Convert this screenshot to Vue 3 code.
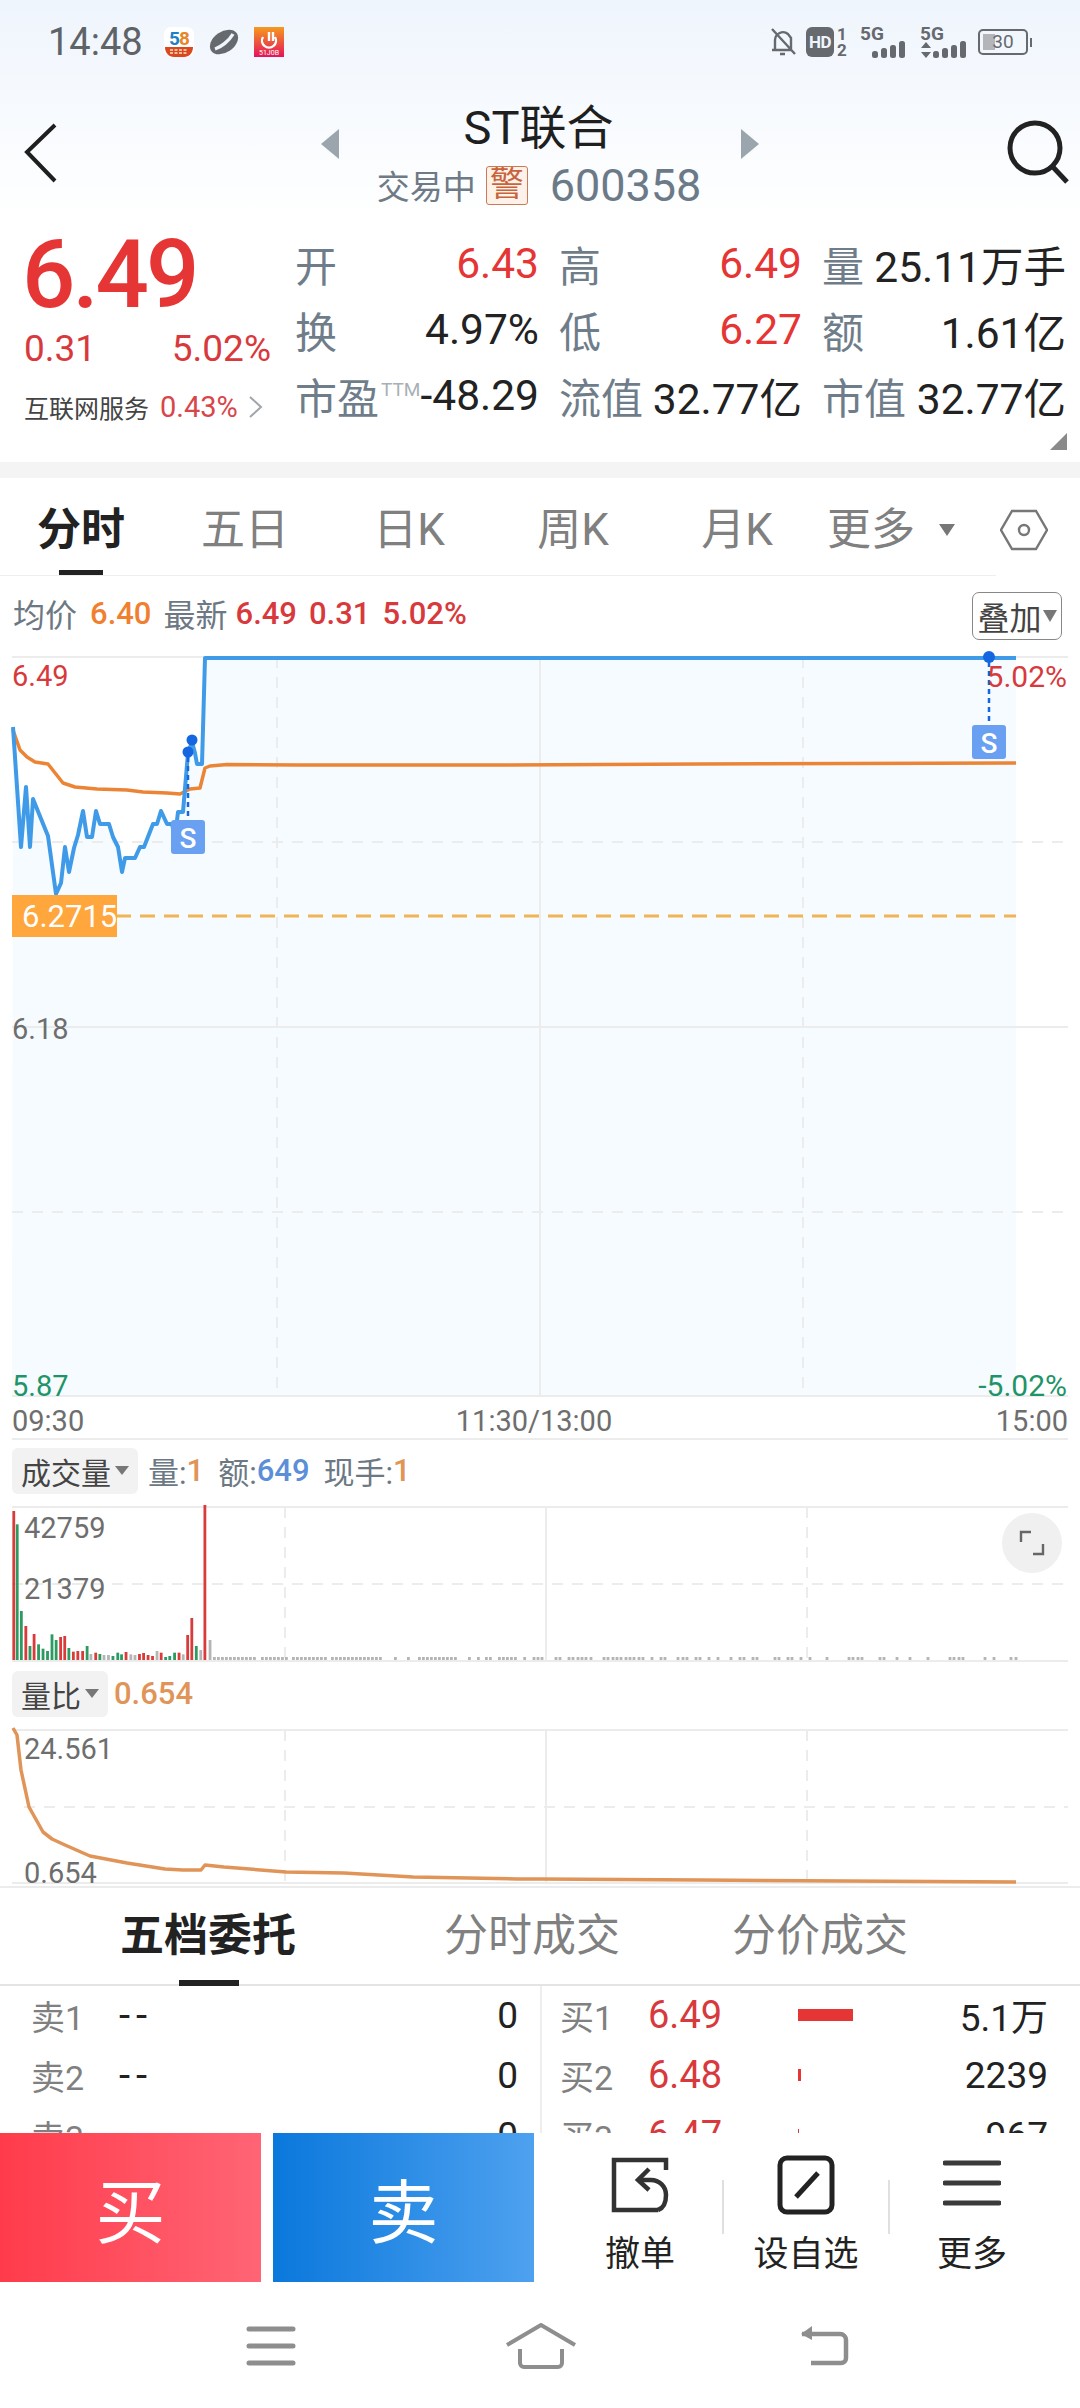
<template>
  <div class="screen">
    <header class="top">
      <div class="status">
        <span class="clock">14:48</span>
        <svg class="app-icon" width="30" height="30" viewBox="0 0 30 30">
          <rect width="30" height="30" rx="7" fill="#fff" />
          <text x="5" y="18" class="t58" fill="#1d7fc9">5</text>
          <text x="15" y="18" class="t58" fill="#e8862a">8</text>
          <path d="M1 20h28c0 6-4 10-9 10H10C5 30 1 26 1 20z" fill="#d9481f" />
          <path d="M6 23h18M6 26h18" stroke="#fbe3c5" stroke-width="1.6" stroke-dasharray="3 1.5" />
        </svg>
        <svg class="app-icon planet" width="30" height="28" viewBox="0 0 30 28">
          <ellipse cx="15" cy="14" rx="15.5" ry="10.5" transform="rotate(-35 15 14)" fill="#66696e" />
          <path d="M6 21 C12 19 20 13 24 6" stroke="#eff5fd" stroke-width="3.4" fill="none" />
        </svg>
        <svg class="app-icon" width="30" height="30" viewBox="0 0 30 30">
          <defs>
            <linearGradient id="appred" x1="0" y1="0" x2="0" y2="1">
              <stop offset="0" stop-color="#f59a1d" />
              <stop offset="1" stop-color="#e5135c" />
            </linearGradient>
          </defs>
          <rect width="30" height="30" fill="url(#appred)" />
          <path d="M9 10a7 7 0 1 0 12 0M15 5v9M19 5v9" stroke="#fff" stroke-width="2.4" fill="none" />
          <text x="15" y="28" class="tiny" text-anchor="middle">51J0B</text>
        </svg>
        <div class="status-right">
          <svg width="28" height="30" viewBox="0 0 28 30" fill="none" stroke="#66696e" stroke-width="2.4">
            <path d="M6 22V13a8 8 0 0 1 13-6l3 4v11M3 23h20M11 27h5M3 2l23 25" />
          </svg>
          <span class="hd">HD</span>
          <span class="sim"><b>1</b><b>2</b></span>
          <span class="net">
            <b>5G</b>
            <svg width="36" height="17" viewBox="0 0 36 17" fill="#66696e">
              <rect x="1" y="10" width="6" height="7" rx="2.5" /><rect x="10" y="7" width="6" height="10" rx="2.5" /><rect x="19" y="4" width="6" height="13" rx="2.5" /><rect x="28" y="0" width="6" height="17" rx="2.5" />
            </svg>
          </span>
          <span class="net second">
            <b>5G</b>
            <svg width="48" height="17" viewBox="0 0 48 17" fill="#66696e">
              <path d="M1 7l5-6 5 6zM1 11h10l-5 6z" />
              <rect x="13" y="10" width="6" height="7" rx="2.5" /><rect x="22" y="7" width="6" height="10" rx="2.5" /><rect x="31" y="4" width="6" height="13" rx="2.5" /><rect x="40" y="0" width="6" height="17" rx="2.5" />
            </svg>
          </span>
          <span class="battery"><i></i><em>30</em></span>
          <span class="nub"></span>
        </div>
      </div>
      <div class="title-bar">
        <svg class="back" width="40" height="64" viewBox="0 0 40 64" fill="none" stroke="#1f1f1f" stroke-width="4">
          <path d="M32 4L4 31l28 29" />
        </svg>
        <div class="title-mid">
          <span class="tri-l"></span>
          <div class="title-text">
            <div class="name">ST联合</div>
            <div class="sub">
              <span class="trading">交易中</span>
              <span class="warn">警</span>
              <span class="code">600358</span>
            </div>
          </div>
          <span class="tri-r"></span>
        </div>
        <svg class="search" width="66" height="64" viewBox="0 0 66 64" fill="none" stroke="#222" stroke-width="5">
          <circle cx="29" cy="28" r="25" />
          <path d="M46 46l15 16" />
        </svg>
      </div>
    </header>

    <section class="quote">
      <div class="quote-left">
        <div class="price">6.49</div>
        <div class="change"><span>0.31</span><span>5.02%</span></div>
        <div class="sector">
          <span class="sector-name">互联网服务</span>
          <span class="sector-pct">0.43%</span>
          <svg width="16" height="22" viewBox="0 0 16 22" fill="none" stroke="#a0a6ab" stroke-width="2"><path d="M2 1l11 10L2 21" /></svg>
        </div>
      </div>
      <div class="quote-grid">
        <div v-for="item in quoteItems" :key="item.label" class="cell" :class="item.col">
          <span class="lab">{{ item.label }}<sup v-if="item.sup">{{ item.sup }}</sup></span>
          <span class="val" :class="{ up: item.up }">{{ item.value }}</span>
        </div>
      </div>
      <span class="corner"></span>
    </section>
    <div class="band"></div>

    <nav class="tabs">
      <div v-for="t in periods" :key="t" class="tab" :class="{ active: t === '分时' }">{{ t }}</div>
      <div class="tab-more">更多<span class="small-tri"></span></div>
      <svg class="hex" width="48" height="42" viewBox="0 0 48 42" fill="none" stroke="#777" stroke-width="2.4">
        <path d="M12 2h24l11 19-11 19H12L1 21z" />
        <circle cx="24" cy="21" r="5" />
      </svg>
    </nav>

    <div class="chart-head">
      <span class="gray">均价</span>
      <span class="orange">6.40</span>
      <span class="gray">最新</span>
      <span class="red latest">6.49</span>
      <span class="red">0.31</span>
      <span class="red">5.02%</span>
      <span class="overlay">叠加<span class="small-tri"></span></span>
    </div>

    <svg class="price-chart" width="1080" height="754" viewBox="0 650 1080 754">
      <polygon :points="`${pricePts} 1016,1396 12,1396`" fill="#f6fbff" />
      <path d="M12 657H1068" class="grid-solid" />
      <path d="M12 842H1068M12 1212H1068" class="grid-dash" />
      <path d="M12 1027H1068" class="grid-solid" />
      <path d="M12 1396H1068" class="grid-solid" />
      <path d="M277 657V1396M803 657V1396" class="grid-dash" />
      <path d="M540 657V1396" class="grid-solid" />
      <path d="M12 916H1016" class="tag-line" />
      <polyline :points="avgPts" class="line-avg" />
      <polyline :points="pricePts" class="line-price" />
      <path d="M188 757V820M989 662V725" class="dot-line" />
      <circle cx="188" cy="752" r="5.5" fill="#1467e0" />
      <circle cx="192" cy="740" r="5.5" fill="#1467e0" />
      <circle cx="989" cy="657" r="6" fill="#1467e0" />
      <rect x="171" y="820" width="34" height="34" rx="3" fill="#6aa0f2" />
      <text x="188" y="848" class="s-mark">S</text>
      <rect x="972" y="725" width="34" height="34" rx="3" fill="#6aa0f2" />
      <text x="989" y="753" class="s-mark">S</text>
      <rect x="12" y="895" width="105" height="42" fill="#ffa63d" />
      <text x="22" y="927" class="tag-text">6.2715</text>
      <text x="12" y="686" class="axis red-fill">6.49</text>
      <text x="12" y="1039" class="axis gray-fill">6.18</text>
      <text x="12" y="1396" class="axis green-fill">5.87</text>
      <text x="1067" y="687" class="axis wide red-fill end">5.02%</text>
      <text x="1067" y="1396" class="axis wide green-fill end">-5.02%</text>
    </svg>
    <div class="time-row"><span>09:30</span><span class="mid-time">11:30/13:00</span><span>15:00</span></div>

    <div class="sub-head vol-head">
      <span class="chip">成交量<span class="chip-tri"></span></span>
      <span class="gray">量:</span><span class="peach">1</span>
      <span class="gray gap">额:</span><span class="blue">649</span>
      <span class="gray gap">现手:</span><span class="peach">1</span>
    </div>
    <div class="sub-chart">
      <svg width="1080" height="160" viewBox="0 1505 1080 160">
        <path d="M12 1507H1068M12 1661H1068M546 1507V1661" class="grid-solid" />
        <path d="M12 1584H1068M285 1507V1661M807 1507V1661" class="grid-dash" />
        <rect v-for="(b, i) in volBars" :key="i" :x="b.x" :y="1660 - b.h" width="2.8" :height="b.h" :fill="b.c" />
        <text x="24" y="1538" class="axis gray-fill">42759</text>
        <text x="24" y="1599" class="axis gray-fill">21379</text>
      </svg>
      <span class="expand">
        <svg width="26" height="26" viewBox="0 0 26 26" fill="none" stroke="#666" stroke-width="2.4">
          <path d="M2 12V2h10M24 14v10H14" />
        </svg>
      </span>
    </div>

    <div class="sub-head ratio-head">
      <span class="chip">量比<span class="chip-tri"></span></span>
      <span class="peach ratio-val">0.654</span>
    </div>
    <svg class="ratio-chart" width="1080" height="160" viewBox="0 1726 1080 160">
      <path d="M12 1730H1068M12 1883H1068M546 1730V1883" class="grid-solid" />
      <path d="M24 1807H1068M285 1730V1883M807 1730V1883" class="grid-dash" />
      <polyline :points="ratioPts" class="line-ratio" />
      <text x="24" y="1759" class="axis gray-fill">24.561</text>
      <text x="24" y="1883" class="axis gray-fill">0.654</text>
    </svg>

    <div class="book-tabs">
      <div class="book-tab on">五档委托</div>
      <div class="book-tab">分时成交</div>
      <div class="book-tab">分价成交</div>
    </div>
    <div class="book">
      <div class="book-side sell">
        <div v-for="r in sellRows" :key="r.label" class="book-row">
          <span class="b-label">{{ r.label }}</span>
          <span class="b-price dark">{{ r.price }}</span>
          <span class="b-vol">{{ r.vol }}</span>
        </div>
      </div>
      <div class="book-side buy">
        <div v-for="r in buyRows" :key="r.label" class="book-row">
          <span class="b-label">{{ r.label }}</span>
          <span class="b-price">{{ r.price }}</span>
          <span class="b-bar"><i :style="{ width: r.bar + 'px' }"></i></span>
          <span class="b-vol">{{ r.vol }}</span>
        </div>
      </div>
    </div>

    <div class="actions">
      <button class="trade buy-btn">买</button>
      <button class="trade sell-btn">卖</button>
      <div class="action">
        <svg width="58" height="56" viewBox="0 0 58 56" fill="none" stroke="#333" stroke-width="4.5">
          <path d="M55 13V3H3v50h44" />
          <path d="M47 53c6-2 8-8 8-15 0-9-7-15-15-15H29" />
          <path d="M38 12L27 23l11 10" />
        </svg>
        <span>撤单</span>
      </div>
      <i class="sep"></i>
      <div class="action">
        <svg width="58" height="60" viewBox="0 0 58 60" fill="none" stroke="#222" stroke-width="5">
          <rect x="3" y="3" width="52" height="54" rx="7" />
          <path d="M41 18L19 42" stroke-width="5" />
        </svg>
        <span>设自选</span>
      </div>
      <i class="sep"></i>
      <div class="action">
        <svg width="58" height="56" viewBox="0 0 58 56" fill="none" stroke="#3a3a3a" stroke-width="5" stroke-linecap="round">
          <path d="M2 6h54M2 26h54M2 46h54" />
        </svg>
        <span>更多</span>
      </div>
    </div>

    <footer class="nav">
      <svg width="50" height="40" viewBox="0 0 50 40" fill="none" stroke="#8e8e8e" stroke-width="5" stroke-linecap="round">
        <path d="M3 3h44M3 20h44M3 37h44" />
      </svg>
      <svg width="72" height="46" viewBox="0 0 72 46" fill="none" stroke="#8e8e8e" stroke-width="4">
        <path d="M2 22L36 2l34 20" stroke-linejoin="round" />
        <path d="M15 26v14a4 4 0 0 0 4 4h34a4 4 0 0 0 4-4V26" />
      </svg>
      <svg width="52" height="40" viewBox="0 0 52 40" fill="none" stroke="#8e8e8e" stroke-width="4.5">
        <path d="M4 8h38a6 6 0 0 1 6 6v18a5 5 0 0 1-5 5H13" />
        <path d="M14 0L3 8l11 6z" fill="#8e8e8e" stroke="none" />
      </svg>
    </footer>
  </div>
</template>

<script setup>
const quoteItems = [
  { label: '开', value: '6.43', up: true, col: 'c1' },
  { label: '高', value: '6.49', up: true, col: 'c2' },
  { label: '量', value: '25.11万手', col: 'c3' },
  { label: '换', value: '4.97%', col: 'c1' },
  { label: '低', value: '6.27', up: true, col: 'c2' },
  { label: '额', value: '1.61亿', col: 'c3' },
  { label: '市盈', sup: 'TTM', value: '-48.29', col: 'c1' },
  { label: '流值', value: '32.77亿', col: 'c2' },
  { label: '市值', value: '32.77亿', col: 'c3' },
]

const periods = ['分时', '五日', '日K', '周K', '月K']

const pricePts = '13,727 21,847 26,787 30,847 33,799 48,836 56,894 61,883 65,847 69,872 74,848 78,835 83,811 87,837 92,837 96,811 100,824 109,824 113,837 118,847 122,872 125,858 135,858 140,847 144,847 153,824 157,824 161,811 167,824 172,824 175,837 178,812 183,812 188,753 192,742 195,753 197,764 202,764 205,658 1016,658'
const avgPts = '13,730 20,750 27,757 35,762 48,764 63,783 75,787 97,789 127,790 143,792 167,793 180,794 190,789 200,788 205,768 210,766 227,764.5 300,765 500,765 700,764 1016,763'
const ratioPts = '13,1728 17,1735 21,1770 29,1807 43,1832 52,1839 65,1845 90,1856 127,1863 165,1869 183,1870 201,1870 205,1865 224,1867 286,1872 344,1873 413,1877 517,1879 540,1879 700,1880 1016,1882'

const R = '#d93a3a'
const G = '#2d9a62'
const A = '#b5b5b5'
// [x, 顶部y, 颜色], 取自放大后的坐标
const rawBars = [
  [40, 455, R], [50, 495, G], [62, 755, G], [75, 800, R], [87, 860, G], [99, 824, R], [112, 855, G], [125, 868, G],
  [138, 875, G], [151, 825, G], [163, 842, G], [176, 833, R], [188, 830, R], [200, 866, G], [213, 877, R], [226, 875, R],
  [240, 875, R], [253, 860, G], [264, 884, A], [278, 880, R], [290, 884, G], [302, 887, A], [315, 887, A], [328, 890, G],
  [342, 880, G], [353, 885, G], [366, 878, R], [380, 885, A], [392, 887, A], [405, 884, R], [417, 881, R], [430, 887, R],
  [443, 890, R], [456, 875, A], [468, 880, R], [481, 893, G], [493, 890, G], [507, 880, G], [520, 880, R], [532, 885, A],
  [545, 827, R], [557, 776, R], [570, 860, G], [583, 872, A], [595, 437, R], [610, 842, A],
]
const leftDots = [
  [213, 255], [261, 285], [292, 324], [331, 382], [394, 394], [407, 407], [418, 456], [468, 468], [477, 477],
  [485, 491], [498, 517],
]
const rightDots = [14, 42, 54, 66, 108, 120, 147, 159, 174, 186, 198, 213, 252, 264, 279, 291, 303, 318, 330, 342, 357, 369, 396, 423, 435, 474, 489, 501, 528, 540, 567, 594, 633, 660, 672, 699, 711, 765, 777, 804, 816, 843, 870, 921, 987, 999, 1014, 1026, 1080, 1092, 1131, 1170, 1224, 1290, 1302, 1317, 1329, 1395, 1422, 1473, 1488]

const volBars = rawBars.map(([x, y, c]) => ({ x: x / 2.904 - 1.4, h: (902 - y) / 3, c }))
leftDots.forEach(([a, b]) => {
  for (let x = a; x <= b; x += 4) volBars.push({ x, h: 3, c: A })
})
rightDots.forEach((x) => volBars.push({ x: 520 + x / 3 - 1.4, h: 3, c: A }))

const sellRows = [
  { label: '卖1', price: '--', vol: '0' },
  { label: '卖2', price: '--', vol: '0' },
  { label: '卖3', price: '--', vol: '0' },
]
const buyRows = [
  { label: '买1', price: '6.49', bar: 55, vol: '5.1万' },
  { label: '买2', price: '6.48', bar: 3, vol: '2239' },
  { label: '买3', price: '6.47', bar: 1, vol: '967' },
]
</script>

<style scoped>
.screen {
  position: relative;
  width: 1080px;
  height: 2408px;
  overflow: hidden;
  background: #fff;
  color: #222;
  font-family: Roboto, "Noto Sans CJK SC", sans-serif;
}
b, em, i { font-style: normal; }

.top {
  height: 220px;
  background: linear-gradient(#eff5fd, #fff);
}
.status {
  height: 84px;
  display: flex;
  align-items: center;
  padding-left: 48px;
}
.clock {
  font-size: 38px;
  color: #5e6368;
  width: 116px;
}
.app-icon { margin-right: 15px; }
.t58 { font-size: 19px; font-weight: 700; font-family: Roboto, sans-serif; }
.tiny { font-size: 7px; fill: #fff; font-family: Roboto, sans-serif; }
.status-right {
  margin-left: auto;
  margin-right: 48px;
  display: flex;
  align-items: center;
  color: #66696e;
}
.hd {
  width: 28px;
  height: 30px;
  margin-left: 9px;
  background: #66696e;
  border-radius: 6px;
  color: #eff5fd;
  font-size: 17px;
  font-weight: 700;
  line-height: 30px;
  text-align: center;
  letter-spacing: -0.5px;
}
.sim {
  display: flex;
  flex-direction: column;
  margin-left: 3px;
  width: 12px;
  font-size: 17px;
  line-height: 16px;
}
.net {
  display: flex;
  flex-direction: column;
  margin-left: 11px;
  width: 47px;
  height: 32px;
  position: relative;
  font-size: 19px;
  line-height: 15px;
}
.net svg { align-self: flex-end; }
.second { width: 48px; margin-left: 13px; }
.battery {
  position: relative;
  width: 50px;
  height: 26px;
  margin-left: 10px;
  border: 2px solid #66696e;
  border-radius: 5px;
  box-sizing: border-box;
  text-align: center;
  font-size: 19px;
  line-height: 22px;
}
.battery i {
  position: absolute;
  left: 3px;
  top: 3px;
  width: 12px;
  height: 16px;
  background: #b3b5b8;
}
.battery em { position: relative; }
.nub {
  width: 2px;
  height: 9px;
  margin-left: 2px;
  background: #66696e;
}

.title-bar {
  position: relative;
  height: 136px;
  display: flex;
}
.back { position: absolute; left: 23px; top: 37px; }
.search { position: absolute; left: 1006px; top: 36px; }
.title-mid {
  margin: 0 auto;
  width: 438px;
  height: 136px;
  display: flex;
  justify-content: space-between;
  align-items: flex-start;
}
.tri-l, .tri-r {
  width: 0;
  height: 0;
  margin-top: 45px;
  border-top: 15px solid transparent;
  border-bottom: 15px solid transparent;
}
.tri-l { border-right: 18px solid #9aa5ad; }
.tri-r { border-left: 18px solid #9aa5ad; }
.title-text { text-align: center; }
.name {
  height: 70px;
  padding-top: 14px;
  padding-right: 3px;
  box-sizing: border-box;
  font-size: 47px;
  line-height: 60px;
  color: #1f1f1f;
}
.sub {
  display: flex;
  align-items: center;
  height: 40px;
  margin-top: 11px;
  margin-left: -2px;
  white-space: nowrap;
}
.trading { font-size: 33px; color: #6e7a85; }
.warn {
  width: 42px;
  height: 39px;
  margin-left: 10px;
  box-sizing: border-box;
  border: 1.5px solid #cc7a55;
  border-radius: 3px;
  background: #fdf1ea;
  color: #c8643c;
  font-size: 34px;
  line-height: 35px;
  text-align: center;
}
.code {
  margin-left: 22px;
  font-size: 45px;
  color: #6c7a88;
}

.quote {
  position: relative;
  height: 242px;
  display: flex;
}
.quote-left { width: 295px; padding-left: 24px; box-sizing: border-box; }
.price {
  height: 104px;
  padding-top: 2px;
  margin-left: -2px;
  font-size: 94px;
  line-height: 106px;
  font-weight: 500;
  letter-spacing: -3px;
  color: #e53535;
}
.change {
  display: flex;
  justify-content: space-between;
  width: 247px;
  height: 46px;
  font-size: 37px;
  line-height: 46px;
  color: #d8393c;
}
.sector {
  display: flex;
  align-items: center;
  height: 36px;
  margin-top: 17px;
}
.sector-name { font-size: 25px; color: #444; }
.sector-pct { margin-left: 11px; margin-right: 10px; font-size: 29px; color: #d8464a; }
.quote-grid {
  display: grid;
  grid-template-columns: 244px 243px 244px;
  column-gap: 20px;
  grid-auto-rows: 66px;
  padding-top: 10px;
}
.cell {
  display: flex;
  justify-content: space-between;
  align-items: center;
  font-size: 42px;
  white-space: nowrap;
}
.cell .val { font-size: 42.5px; }
.lab { color: #6f7d8a; }
.lab sup { font-size: 19px; color: #a8b0b6; vertical-align: 18px; line-height: 0; margin-left: 2px; }
.val { color: #222; }
.val.up { color: #e53535; }
.corner {
  position: absolute;
  right: 13px;
  bottom: 12px;
  width: 0;
  height: 0;
  border-left: 17px solid transparent;
  border-bottom: 17px solid #8a8a8a;
}
.band { height: 16px; background: #f4f4f4; }

.tabs {
  position: relative;
  display: flex;
  height: 98px;
  box-sizing: border-box;
  align-items: flex-start;
}
.tabs::after {
  content: "";
  position: absolute;
  left: 0;
  bottom: 0;
  width: 996px;
  height: 1px;
  background: #eee;
}
.tab, .tab-more {
  font-size: 44px;
  line-height: 104px;
  color: #808080;
}
.tab { width: 164px; text-align: center; position: relative; left: -1px; }
.tab.active { color: #222; font-weight: 700; }
.tab.active::after {
  content: "";
  position: absolute;
  left: 60px;
  top: 92px;
  width: 44px;
  height: 6px;
  background: #222;
}
.tab-more { margin-left: 7px; display: flex; align-items: center; height: 104px; }
.small-tri {
  width: 0;
  height: 0;
  border-left: 8px solid transparent;
  border-right: 8px solid transparent;
  border-top: 12px solid #777;
}
.tab-more .small-tri { margin-left: 24px; }
.hex { margin-left: 45px; margin-top: 31px; }

.chart-head {
  position: relative;
  height: 74px;
  padding-left: 13px;
  display: flex;
  align-items: center;
  gap: 12px;
  font-size: 31px;
  font-weight: 500;
}
.gray { color: #6c7883; font-size: 32px; font-weight: 400; }
.orange { color: #f08030; margin-left: 1px; }
.red { color: #d8393c; }
.latest { margin-left: -4px; }
.overlay {
  position: absolute;
  left: 972px;
  top: 16px;
  width: 90px;
  height: 48px;
  box-sizing: border-box;
  border: 1.5px solid #888;
  border-radius: 7px;
  display: flex;
  align-items: center;
  justify-content: center;
  font-size: 32px;
  font-weight: 400;
  color: #444;
}
.overlay .small-tri { margin-left: 1px; border-left-width: 7px; border-right-width: 7px; border-top-width: 12px; }

.price-chart, .ratio-chart { display: block; overflow: visible; }
.grid-solid { stroke: #ececec; stroke-width: 2; fill: none; }
.grid-dash { stroke: #ececec; stroke-width: 2; stroke-dasharray: 11 9; fill: none; }
.tag-line { stroke: #f2b354; stroke-width: 3; stroke-dasharray: 15 9; stroke-dashoffset: -8; fill: none; }
.line-price { fill: none; stroke: #3f9be8; stroke-width: 4; stroke-linejoin: round; }
.line-avg { fill: none; stroke: #ec8436; stroke-width: 3.5; stroke-linejoin: round; }
.line-ratio { fill: none; stroke: #e09458; stroke-width: 3.5; stroke-linejoin: round; }
.dot-line { stroke: #1467e0; stroke-width: 2.5; stroke-dasharray: 5 4; fill: none; }
.s-mark { font-size: 28px; font-weight: 500; fill: #fff; text-anchor: middle; font-family: Roboto, sans-serif; }
.tag-text { font-size: 31px; fill: #fff; font-family: Roboto, sans-serif; }
.axis { font-size: 29px; font-family: Roboto, sans-serif; }
.axis.wide { font-size: 30px; }
.end { text-anchor: end; }
.red-fill { fill: #d8393c; }
.gray-fill { fill: #6e6e6e; }
.green-fill { fill: #1f9469; }

.time-row {
  height: 34px;
  margin: 0 12px;
  display: flex;
  justify-content: space-between;
  align-items: center;
  font-size: 29px;
  color: #6e6e6e;
  border-bottom: 2px solid #ececec;
}
.mid-time { margin-right: 12px; }
.sub-head {
  display: flex;
  align-items: center;
  box-sizing: border-box;
  padding-bottom: 4px;
  font-size: 32px;
  padding-left: 12px;
}
.vol-head { height: 65px; }
.ratio-head { height: 61px; }
.chip {
  display: inline-flex;
  align-items: center;
  height: 46px;
  padding: 0 9px;
  margin-right: 10px;
  background: #f2f2f2;
  border-radius: 6px;
  font-size: 30px;
  color: #444;
}
.chip-tri {
  width: 0;
  height: 0;
  margin-left: 4px;
  border-left: 7px solid transparent;
  border-right: 7px solid transparent;
  border-top: 9px solid #777;
}
.gray.gap { margin-left: 14px; }
.sub-head .gray { font-size: 31px; }
.peach { color: #e09458; font-weight: 500; font-size: 31px; }
.blue { color: #5b8fd8; font-weight: 500; font-size: 31px; }
.ratio-val { margin-left: -4px; }
.sub-chart { position: relative; height: 160px; }
.sub-chart > svg { display: block; overflow: visible; }
.expand {
  position: absolute;
  right: 18px;
  top: 8px;
  width: 60px;
  height: 60px;
  border-radius: 50%;
  background: #f0f0f0;
  display: flex;
  align-items: center;
  justify-content: center;
}
.expand svg { display: block; }

.book-tabs {
  height: 96px;
  border-top: 2px solid #ececec;
  border-bottom: 2px solid #e4e4e4;
  position: relative;
}
.book-tab {
  position: absolute;
  top: 19px;
  font-size: 44px;
  line-height: 58px;
  color: #808080;
  white-space: nowrap;
}
.book-tab:nth-child(1) { left: 120px; }
.book-tab:nth-child(2) { left: 444px; }
.book-tab:nth-child(3) { left: 732px; }
.book-tab.on { color: #222; font-weight: 700; }
.book-tab.on::after {
  content: "";
  position: absolute;
  left: 59px;
  top: 73px;
  width: 60px;
  height: 6px;
  background: #222;
}
.book {
  height: 147px;
  display: flex;
  overflow: hidden;
}
.book-side { width: 540px; box-sizing: border-box; }
.sell { padding-left: 31px; padding-right: 22px; }
.buy { padding-left: 18px; padding-right: 32px; border-left: 2px solid #eee; }
.book-row {
  display: flex;
  align-items: center;
  height: 60px;
  margin-top: -1px;
  margin-bottom: 1px;
  font-size: 34px;
  color: #222;
  white-space: nowrap;
}
.b-label { width: 88px; color: #808080; }
.b-price { width: 150px; font-size: 38px; color: #d8393c; }
.b-price.dark { color: #222; flex: 1; font-size: 40px; letter-spacing: 6px; }
.b-bar { width: 100px; height: 12px; display: block; }
.b-bar i { display: block; height: 12px; background: #e53535; }
.b-vol { margin-left: auto; font-size: 37px; }

.actions {
  height: 149px;
  display: flex;
  background: #fff;
  position: relative;
}
.trade {
  width: 261px;
  height: 149px;
  border: 0;
  padding: 0;
  color: #fff;
  font-size: 70px;
  font-family: Roboto, "Noto Sans CJK SC", sans-serif;
}
.buy-btn { background: linear-gradient(90deg, #ff3b4b, #ff6575); }
.sell-btn { margin-left: 12px; background: linear-gradient(90deg, #0a78dc, #4ea1ef); }
.action {
  width: 164px;
  padding-top: 22px;
  box-sizing: border-box;
  display: flex;
  flex-direction: column;
  align-items: center;
  font-size: 35px;
  color: #222;
  flex-shrink: 0;
}
.action svg { height: 60px; margin-bottom: 10px; }
.action:nth-of-type(1) { margin-left: 24px; width: 164px; }
.sep {
  width: 2px;
  height: 54px;
  margin-top: 47px;
  background: #e0e0e0;
  flex-shrink: 0;
}
.nav {
  height: 126px;
  display: flex;
  align-items: center;
  position: relative;
}
.nav svg { position: absolute; top: 41px; }
.nav svg:nth-child(1) { left: 246px; top: 44px; }
.nav svg:nth-child(2) { left: 505px; }
.nav svg:nth-child(3) { left: 798px; top: 44px; }
</style>
